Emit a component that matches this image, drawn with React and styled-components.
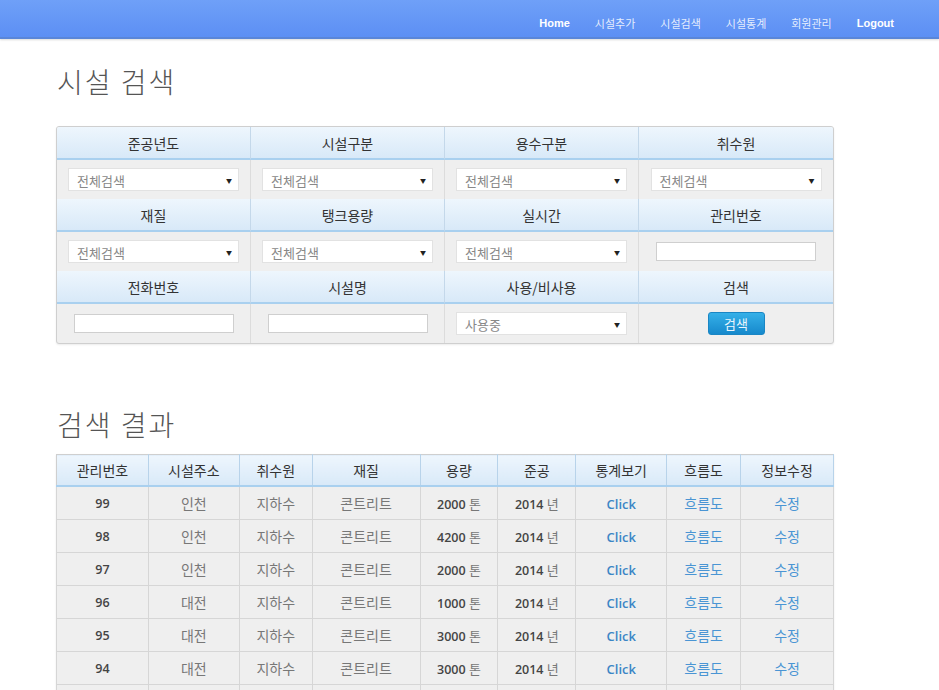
import React from 'react';
import styled, { createGlobalStyle } from 'styled-components';

const navItems = [
  { id: 1, name: 'Home', strong: true },
  { id: 2, name: '시설추가' },
  { id: 3, name: '시설검색' },
  { id: 4, name: '시설통계' },
  { id: 5, name: '회원관리' },
  { id: 6, name: 'Logout', strong: true },
];

const searchRows = [
  {
    heads: ['준공년도', '시설구분', '용수구분', '취수원'],
    fields: ['select', 'select', 'select', 'select'],
  },
  {
    heads: ['재질', '탱크용량', '실시간', '관리번호'],
    fields: ['select', 'select', 'select', 'input'],
  },
  {
    heads: ['전화번호', '시설명', '사용/비사용', '검색'],
    fields: ['input', 'input', 'select-use', 'button'],
  },
];

const columns = [
  { name: '관리번호', w: 92 },
  { name: '시설주소', w: 91 },
  { name: '취수원', w: 73 },
  { name: '재질', w: 108 },
  { name: '용량', w: 78 },
  { name: '준공', w: 78 },
  { name: '통계보기', w: 91 },
  { name: '흐름도', w: 74 },
  { name: '정보수정', w: 93 },
];

const results = [
  { id: 99, city: '인천', size: 2000 },
  { id: 98, city: '인천', size: 4200 },
  { id: 97, city: '인천', size: 2000 },
  { id: 96, city: '대전', size: 1000 },
  { id: 95, city: '대전', size: 3000 },
  { id: 94, city: '대전', size: 3000 },
  { id: 93, city: '대전', size: 3000 },
];

function App() {
  const renderField = (type, key) => {
    if (type === 'input') return <TextBox key={key} />;
    if (type === 'button') return <SearchButton key={key}>검색</SearchButton>;
    return (
      <SelectBox key={key}>
        <span>{type === 'select-use' ? '사용중' : '전체검색'}</span>
        <Arrow>▼</Arrow>
      </SelectBox>
    );
  };

  return (
    <>
      <GlobalStyle />
      <TopNav>
        <NavMenu>
          {navItems.map(({ id, name, strong }) => (
            <NavLink key={id} strong={strong}>
              {name}
            </NavLink>
          ))}
        </NavMenu>
      </TopNav>
      <Content>
        <PageTitle>시설 검색</PageTitle>
        <SearchPanel>
          {searchRows.map((row, i) => (
            <React.Fragment key={i}>
              {row.heads.map((h) => (
                <HeadCell key={h}>{h}</HeadCell>
              ))}
              {row.fields.map((f, j) => (
                <FieldCell key={j}>{renderField(f, j)}</FieldCell>
              ))}
            </React.Fragment>
          ))}
        </SearchPanel>
        <PageTitle second>검색 결과</PageTitle>
        <ResultTable>
          <colgroup>
            {columns.map((c) => (
              <col key={c.name} style={{ width: `${(c.w / 778) * 100}%` }} />
            ))}
          </colgroup>
          <thead>
            <tr>
              {columns.map((c) => (
                <TH key={c.name}>{c.name}</TH>
              ))}
            </tr>
          </thead>
          <tbody>
            {results.map((r) => (
              <tr key={r.id}>
                <TD num>{r.id}</TD>
                <TD>{r.city}</TD>
                <TD>지하수</TD>
                <TD>콘트리트</TD>
                <TD num>
                  {r.size} <Unit>톤</Unit>
                </TD>
                <TD num>
                  2014 <Unit>년</Unit>
                </TD>
                <TD>
                  <ClickLink>Click</ClickLink>
                </TD>
                <TD>
                  <TextLink>흐름도</TextLink>
                </TD>
                <TD>
                  <TextLink>수정</TextLink>
                </TD>
              </tr>
            ))}
          </tbody>
        </ResultTable>
      </Content>
    </>
  );
}

const GlobalStyle = createGlobalStyle`
  body {
    margin: 0;
    background: #fff;
    font-family: "Noto Sans CJK KR", "Noto Sans", sans-serif;
    overflow: hidden;
  }
`;

const TopNav = styled.nav`
  height: 37px;
  background: linear-gradient(#6fa0f8, #5c8ff4);
  border-bottom: 2px solid #5a86d8;
  box-shadow: 0 1px 2px rgba(0, 0, 0, 0.15);
  display: flex;
  justify-content: flex-end;
  align-items: center;
`;

const NavMenu = styled.ul`
  display: flex;
  align-items: center;
  margin: 0;
  padding: 0 45px 0 0;
  list-style: none;
  gap: 25px;
`;

const NavLink = styled.li`
  font-family: ${(props) =>
    props.strong ? '"Liberation Sans", Arial, sans-serif' : '"Noto Sans CJK KR", sans-serif'};
  font-size: 11px;
  font-weight: ${(props) => (props.strong ? 700 : 400)};
  color: ${(props) => (props.strong ? '#ffffff' : 'rgba(255,255,255,0.85)')};
  padding-top: 8px;
  cursor: pointer;
`;

const Content = styled.div`
  padding-left: 56px;
  width: 778px;
`;

const PageTitle = styled.h1`
  margin: ${(props) => (props.second ? '60px 0 0' : '22px 0 0')};
  height: ${(props) => (props.second ? '50px' : '65px')};
  font-size: 28px;
  line-height: 40px;
  font-weight: 300;
  color: #555;
  letter-spacing: 2px;
  padding-left: 1px;
`;

const SearchPanel = styled.div`
  display: grid;
  grid-template-columns: repeat(4, 1fr);
  grid-auto-rows: 33px 39px;
  border: 1px solid #cfcfcf;
  border-radius: 3px;
  overflow: hidden;
  box-shadow: 0 1px 2px rgba(0, 0, 0, 0.08);
  background: #efefef;
`;

const HeadCell = styled.div`
  display: flex;
  align-items: center;
  justify-content: center;
  background: linear-gradient(#eef6fd, #d8e9f8);
  border-bottom: 2px solid #a9d0ef;
  border-right: 1px solid #c4d8ea;
  font-size: 14px;
  color: #333;
  &:nth-child(4n) {
    border-right: none;
  }
`;

const FieldCell = styled.div`
  display: flex;
  align-items: center;
  justify-content: center;
  border-right: 1px solid #dcdcdc;
  &:nth-child(4n) {
    border-right: none;
  }
`;

const SelectBox = styled.div`
  width: 171px;
  height: 23px;
  box-sizing: border-box;
  background: #fff;
  border: 1px solid #e2e2e2;
  display: flex;
  align-items: center;
  justify-content: space-between;
  padding: 2px 6px 0 8px;
  font-size: 13px;
  color: #888;
`;

const Arrow = styled.span`
  font-size: 6px;
  color: #222;
`;

const TextBox = styled.div`
  width: 160px;
  height: 19px;
  box-sizing: border-box;
  background: #fff;
  border: 1px solid #cfcfcf;
`;

const SearchButton = styled.button`
  width: 57px;
  height: 23px;
  padding: 0;
  border: 1px solid #1a86c4;
  border-radius: 3px;
  background: linear-gradient(#35b0e8, #1689cc);
  color: #eaf6fd;
  font-family: "Noto Sans CJK KR", sans-serif;
  font-size: 13px;
  cursor: pointer;
`;

const ResultTable = styled.table`
  width: 778px;
  border-collapse: collapse;
  table-layout: fixed;
  border: 1px solid #cfcfcf;
  box-shadow: 0 1px 2px rgba(0, 0, 0, 0.08);
`;

const TH = styled.th`
  height: 30px;
  padding: 0;
  background: linear-gradient(#eef6fd, #d8e9f8);
  border-bottom: 2px solid #a9d0ef;
  border-right: 1px solid #b8d3ea;
  font-size: 14px;
  font-weight: 400;
  color: #333;
`;

const TD = styled.td`
  height: 32px;
  padding: 0;
  text-align: center;
  background: #efefef;
  border: 1px solid #d6d6d6;
  font-family: ${(props) =>
    props.num ? '"Open Sans", "DejaVu Sans", sans-serif' : '"Noto Sans CJK KR", sans-serif'};
  font-size: ${(props) => (props.num ? '12.5px' : '14px')};
  font-weight: ${(props) => (props.num ? 600 : 400)};
  color: ${(props) => (props.num ? '#444' : '#777')};
`;

const Unit = styled.span`
  font-family: "Noto Sans CJK KR", sans-serif;
  font-weight: 400;
  font-size: 13px;
  color: #777;
`;

const ClickLink = styled.span`
  font-family: "Open Sans", "DejaVu Sans", sans-serif;
  font-weight: 600;
  font-size: 13px;
  color: #3b86c6;
  cursor: pointer;
`;

const TextLink = styled.span`
  font-size: 14px;
  color: #4a95d4;
  cursor: pointer;
`;

export default App;
